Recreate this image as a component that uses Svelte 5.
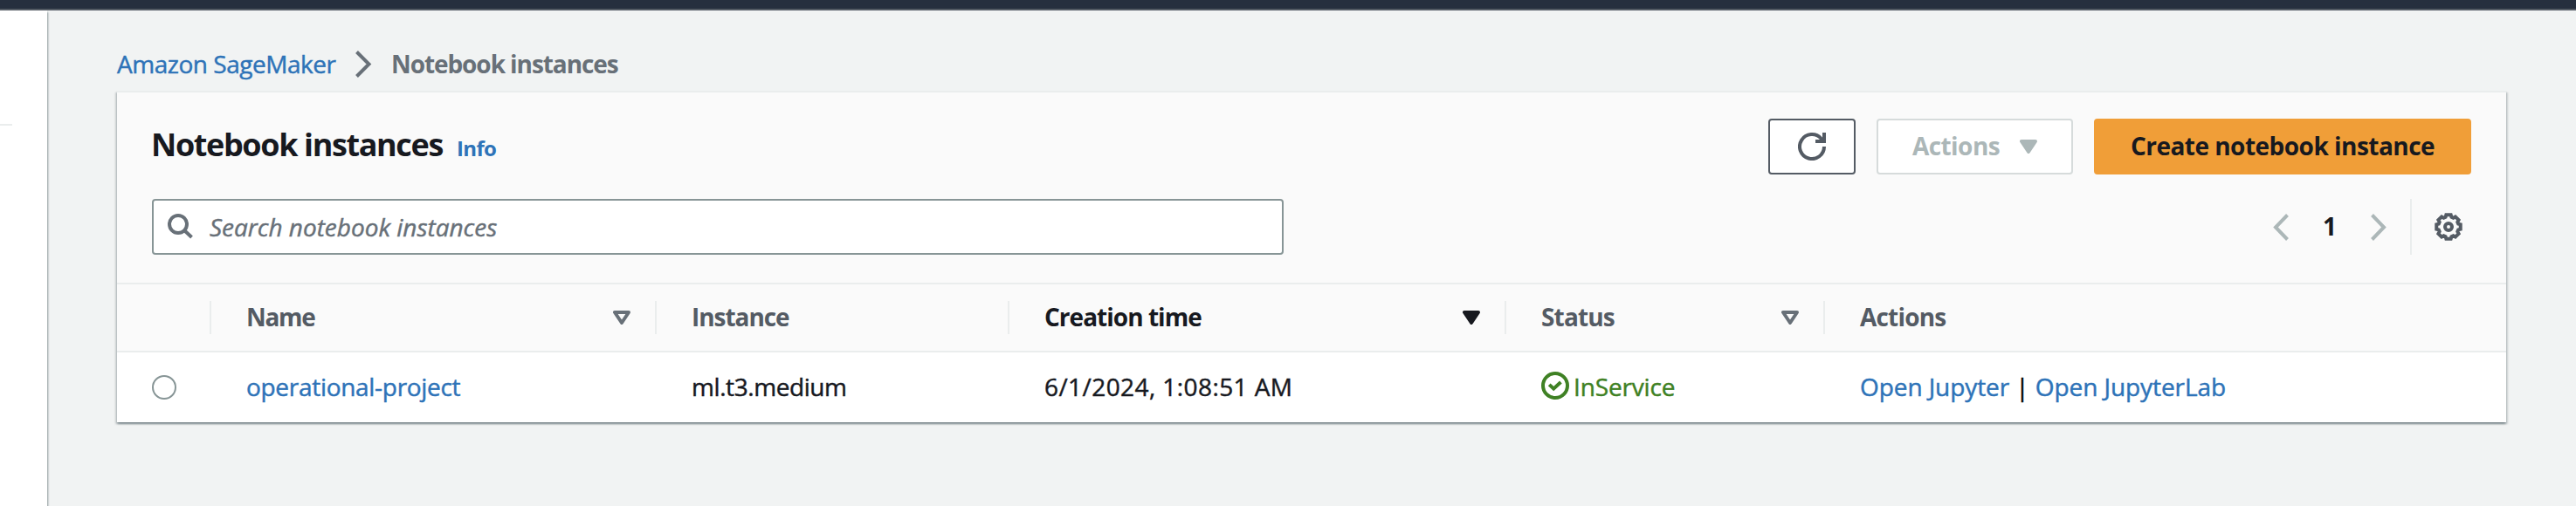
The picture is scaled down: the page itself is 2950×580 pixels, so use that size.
<script>
  const columns = [
    { label: '', cls: 'select' },
    { label: 'Name', sort: 'outline', track: -1.3 },
    { label: 'Instance', track: -1.05 },
    { label: 'Creation time', sort: 'filled', track: -0.98 },
    { label: 'Status', sort: 'outline', track: -0.85 },
    { label: 'Actions', track: -0.8, last: true }
  ];

  // Eight-toothed gear outline around (16, 16)
  const gear = Array.from({ length: 8 }, (_, i) =>
    [[-11, 14], [11, 14], [17, 11.7], [28, 11.7]].map(([deg, r]) => {
      const a = ((i * 45 + deg - 90) * Math.PI) / 180;
      return `${(16 + r * Math.cos(a)).toFixed(2)},${(16 + r * Math.sin(a)).toFixed(2)}`;
    }).join(' ')
  ).join(' ');
</script>

<div class="app">
  <header class="topbar"></header>
  <div class="body">
    <aside class="side"><div class="rule"></div></aside>
    <main>
      <nav class="crumbs">
        <a class="crumb-link" href="#top">Amazon SageMaker</a>
        <svg class="crumb-sep" width="19" height="31" viewBox="0 0 19 31"><polyline points="1.5,1.5 15.5,15.5 1.5,29.5" /></svg>
        <span class="crumb-here">Notebook instances</span>
      </nav>

      <section class="card">
        <div class="head">
          <div class="title-row">
            <h1>Notebook instances</h1>
            <a class="info" href="#info">Info</a>
            <div class="buttons">
              <button class="btn refresh" aria-label="Refresh">
                <svg width="32" height="32" viewBox="0 0 32 32">
                  <path d="M30 16A14 14 0 1 1 26.5 6.8L29 9.5" />
                  <path d="M30 0V10H20" />
                </svg>
              </button>
              <button class="btn disabled">
                <span>Actions</span>
                <svg class="tri filled" width="20" height="16" viewBox="0 0 20 16"><path d="M2 2H18L10 14Z" /></svg>
              </button>
              <button class="btn primary"><span>Create notebook instance</span></button>
            </div>
          </div>
          <div class="tools">
            <div class="search">
              <svg width="30" height="30" viewBox="0 0 30 30">
                <circle cx="12" cy="12" r="10" />
                <path d="M18.5 18.5L27.5 27" />
              </svg>
              <span>Search notebook instances</span>
            </div>
            <div class="pager">
              <svg class="prev" width="18" height="31" viewBox="0 0 18 31"><polyline points="16.5,1.5 3,15.5 16.5,29.5" /></svg>
              <b>1</b>
              <svg class="next" width="18" height="31" viewBox="0 0 18 31"><polyline points="1.5,1.5 15,15.5 1.5,29.5" /></svg>
              <i class="split"></i>
              <svg class="gear" width="32" height="32" viewBox="0 0 32 32">
                <polygon points={gear} />
                <circle cx="16" cy="16" r="4" />
              </svg>
            </div>
          </div>
        </div>

        <div class="grid thead">
          {#each columns as c}
            <div class="th {c.cls ?? ''}" class:last={c.last} class:active={c.sort === 'filled'}>
              <span style="letter-spacing:{c.track ?? 0}px">{c.label}</span>
              {#if c.sort}
                <svg class="tri {c.sort}" width="20" height="16" viewBox="0 0 20 16"><path d="M2 2H18L10 14Z" /></svg>
              {/if}
            </div>
          {/each}
        </div>
        <div class="grid row">
          <div class="td select"><span class="radio"></span></div>
          <div class="td"><a class="name" href="#project">operational-project</a></div>
          <div class="td type">ml.t3.medium</div>
          <div class="td date">6/1/2024, 1:08:51 AM</div>
          <div class="td status">
            <svg width="32" height="32" viewBox="0 0 32 32">
              <circle cx="16" cy="16" r="14" />
              <path d="M9.2 14.9L14.2 19.6L22.4 12" />
            </svg>
            <span>InService</span>
          </div>
          <div class="td links"><a href="#jupyter">Open Jupyter</a>&nbsp;<span class="bar">|</span>&nbsp;<a href="#lab">Open JupyterLab</a></div>
        </div>
      </section>
    </main>
  </div>
</div>

<style>
  :global(body) { margin: 0; background: #f1f3f3; }
  .app {
    width: 2950px; height: 580px; overflow: hidden;
    display: flex; flex-direction: column;
    font: 28px/38px "Open Sans", "Noto Sans", sans-serif; color: #17191f; background: #f1f3f3;
  }
  a { color: #2e73b8; text-decoration: none; }
  svg { display: block; flex: none; fill: none; stroke: currentColor; stroke-width: 4; }
  .topbar { box-sizing: border-box; height: 12px; flex: none; background: #262f3e; border-bottom: 2px solid #545b64; }
  .body { flex: 1; display: flex; min-height: 0; }
  .side { width: 54px; flex: none; background: #fff; box-shadow: 1px 2px 2px 0 rgba(0, 28, 36, .42); }
  .rule { width: 14px; height: 2px; margin-top: 130px; background: #eaeded; }
  main { flex: 1; padding: 42px 80px 0; display: flex; flex-direction: column; }

  .crumbs { display: flex; align-items: center; height: 38px; padding-bottom: 12px; }
  .crumb-link { letter-spacing: -.47px; width: 273px; }
  .crumb-link, .search span, .td { -webkit-text-stroke: .45px currentColor; }
  .crumb-sep { color: #687078; margin-top: 1px; }
  .crumb-here { margin-left: 22px; font-weight: 700; color: #687078; letter-spacing: -1.08px; }

  .card {
    height: 378px; border-top: 2px solid #eaeded; background: #fff;
    box-shadow: 0 2px 2px 0 rgba(0, 28, 36, .3), 2px 2px 2px 0 rgba(0, 28, 36, .15), -2px 2px 2px 0 rgba(0, 28, 36, .15);
  }
  .head { box-sizing: border-box; height: 220px; padding: 30px 40px 0; background: #fafafa; border-bottom: 2px solid #eaeded; }
  .title-row { display: flex; align-items: center; height: 64px; }
  h1 { margin: 0; font-size: 36px; line-height: 50px; font-weight: 700; letter-spacing: -1.38px; padding-bottom: 4px; margin-left: -1px; }
  .info { font-size: 24px; line-height: 32px; font-weight: 700; margin-left: 16px; padding-top: 4px; letter-spacing: -.6px; }
  .buttons { display: flex; gap: 24px; margin-left: auto; }
  .btn {
    box-sizing: border-box; height: 64px; display: flex; align-items: center; justify-content: center;
    padding: 0; font: inherit; font-weight: 700; border: 2px solid #545b64; border-radius: 4px; background: #fff; color: #545b64;
  }
  .btn span { padding-bottom: 2px; }
  .refresh { width: 100px; }
  .disabled { width: 225px; border-color: #d6dbdb; color: #acb7b8; gap: 23px; letter-spacing: -.55px; }
  .primary { width: 432px; background: #f09e38; border-color: #f09e38; color: #17191f; letter-spacing: -.52px; }

  .tools { display: flex; align-items: center; margin-top: 28px; height: 64px; }
  .search {
    box-sizing: border-box; width: 1296px; height: 64px; display: flex; align-items: center;
    border: 2px solid #879596; border-radius: 4px; background: #fff; color: #687078; padding-left: 16px; font-style: italic;
  }
  .search span { margin-left: 18px; letter-spacing: -.03px; }
  .pager { display: flex; align-items: center; margin-left: auto; padding-right: 10px; }
  .prev, .next { color: #acb7b8; }
  .pager b { width: 94px; text-align: center; font-weight: 700; padding-bottom: 2px; }
  .split { width: 2px; height: 64px; background: #eaeded; margin: 0 26px 0 27px; }
  .gear { color: #545b64; }

  .grid { display: grid; grid-template-columns: 108px 510px 404px 569px 365px 1fr; }
  .thead { height: 76px; background: #fafafa; border-bottom: 2px solid #eaeded; align-items: center; }
  .th {
    box-sizing: border-box; height: 38px; display: flex; align-items: center; justify-content: space-between;
    padding: 0 28px 0 40px; border-right: 2px solid #eaeded; font-weight: 700; color: #545b64;
  }
  .th span { padding-bottom: 2px; }
  .th.last { border-right: 0; }
  .th.active { color: #17191f; }
  .tri { stroke-linejoin: round; color: #687078; }
  .tri.filled { fill: currentColor; }
  .th.active .tri { color: #17191f; }
  .disabled .tri { color: #acb7b8; }

  .row { height: 80px; align-items: center; }
  .td { padding: 0 0 2px 40px; }
  .radio { display: block; box-sizing: border-box; width: 28px; height: 28px; margin-top: 2px; border: 2px solid #879596; border-radius: 50%; background: #fff; }
  .name { letter-spacing: -.3px; }
  .type { letter-spacing: -.42px; }
  .date { letter-spacing: .42px; }
  .status { display: flex; align-items: center; gap: 5px; color: #3f8124; letter-spacing: -.15px; }
  .status svg { margin-top: -2px; }
  .links { white-space: nowrap; letter-spacing: -.08px; }
  .bar { color: #000; }
</style>
